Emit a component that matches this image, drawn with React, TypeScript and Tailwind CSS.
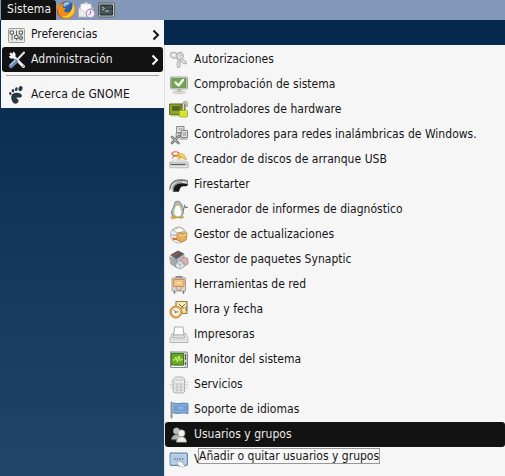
import React from "react";

type IconProps = { children: React.ReactNode; className?: string };

function Icon({ children, className = "" }: IconProps) {
  return (
    <svg viewBox="0 0 20 20" className={`h-5 w-5 shrink-0 ${className}`} fill="none" strokeLinecap="round" strokeLinejoin="round">
      {children}
    </svg>
  );
}

const FirefoxIcon = () => (
  <Icon>
    <circle cx="10.500" cy="10" r="9" fill="#d97a1e" />
    <circle cx="11" cy="8.500" r="7.200" fill="#2c5fa8" />
    <path d="M8 3c2-1.500 5-1 6 0l-2 2-2 .5L9 7 7 5z" fill="#8fc4e8" />
    <path d="M2 4c.5 1 1 1.500 2 1.500C5 4.500 6.500 4 8 4.500L6.500 7c1 1 2.500 1 3.500 1.500L8 10.500c1 2.500 5 2.500 7 0 2-2 2-5 1-7.500 3 3 4 7.500 2 11-2.500 4.500-9.500 6-13.500 3C.5 14 0 8 2 4z" fill="#ef8a1c" />
    <path d="M17 3.500c2.500 5 1.500 10-2 12.500-3 2-7 2-9.500 0 6 1.500 11-3.500 11.500-12.500z" fill="#f8d13a" />
    <path d="M1.500 8c0 5 2 8.500 6 10-4 0-8-5-6-10z" fill="#b9441a" />
  </Icon>
);

const MailIcon = () => (
  <Icon>
    <path d="M3 8l7-6.500L17 8v9H3z" fill="#dcdde0" stroke="#a5a7ac" strokeWidth=".8" />
    <path d="M5 4h10v7l-5 3-5-3z" fill="#fafafa" stroke="#c6c6c6" strokeWidth=".5" />
    <path d="M3 8l7 5 7-5v9H3z" fill="#ebebec" stroke="#b4b4b4" strokeWidth=".6" />
    <circle cx="14.500" cy="13.500" r="4.300" fill="#f1ebf4" stroke="#a893b8" strokeWidth="1.200" />
    <path d="M14.500 11V13.500l-1.500 1" stroke="#85738f" />
  </Icon>
);

const TerminalIcon = () => (
  <Icon>
    <rect x="2.500" y="3" width="16" height="14" rx="1" fill="#c6c8c2" stroke="#5e635f" />
    <rect x="4.500" y="5" width="12" height="10" fill="#37474a" stroke="#20292b" />
    <path d="M5 8c5 1 8-1 11-2M5 11h11M5 13h11" stroke="#5d6e70" strokeWidth=".7" />
    <path d="M6.500 7l2 1.500-2 1.500M9.500 11h3" stroke="#d9e2e0" strokeWidth=".9" />
  </Icon>
);

const PreferencesIcon = () => (
  <Icon>
    <rect x="1.500" y="3.500" width="16" height="14" rx="1" fill="#e9e9e7" stroke="#9b9d99" />
    <path d="M5 6v9M9.500 6v9M14 6v9" stroke="#666" />
    <path d="M3.500 6h3v3h-3zM8 10.500h3v3H8zM12.500 6h3v3h-3zM12.500 12h3v2h-3z" fill="#f9f9f9" stroke="#4d4d4d" strokeWidth=".9" />
  </Icon>
);

const ToolsIcon = () => (
  <Icon>
    <path d="M4 4l12.500 12.500" stroke="#eeeeec" strokeWidth="3" />
    <path d="M2 6c0 2 2 3 4 2.500L8.500 6C9 4 8 2 6 1.500v3L4.500 6z" fill="#f5f5f4" />
    <path d="M17 2.500L10 10" stroke="#e5e7e7" strokeWidth="2" />
    <path d="M8.500 11.500L4 16" stroke="#6788b5" strokeWidth="4.500" />
    <path d="M8 10.500l-4.500 4.500" stroke="#b6c9e0" strokeWidth="1.200" />
    <circle cx="16.300" cy="16.200" r=".8" fill="#777" />
  </Icon>
);

const GnomeIcon = () => (
  <Icon>
    <g fill="#263841">
      <ellipse cx="3.300" cy="8.500" rx="1.200" ry="1.500" transform="rotate(-25 3.300 8.500)" />
      <ellipse cx="6" cy="5.700" rx="1.300" ry="1.700" />
      <ellipse cx="9.300" cy="4.200" rx="1.300" ry="1.900" transform="rotate(12 9.300 4.200)" />
      <ellipse cx="13.500" cy="3.600" rx="2" ry="2.600" transform="rotate(25 13.500 3.600)" />
      <path d="M4.500 10.500c1-3 6.500-3.500 9.500-1.500 1.500 1 1 3-.5 3.500-2 .5-3-.5-4 .3-.7 1 2.500 1 2 3.200-.5 3-3.500 3.500-5.500 1.500-1.300-2-2.300-4.500-1.500-7z" />
    </g>
  </Icon>
);

const KeysIcon = () => (
  <Icon>
    <g fill="#dedede" stroke="#999" strokeWidth=".8">
      <path d="M2 3c3-2 6-.5 6 2l9.500 7-.5 2-2.500-.500L7 8C4.500 9 2 8 1.500 6z" />
      <path d="M9 3c3-2 6 .5 5.500 3.500-.3 1.500-2 3-3.500 2.500V16.500l-1.500 1.500L8 17l.8-1.500-1-1 1-2V8.500C7 7 7 4 9 3z" />
    </g>
    <circle cx="11.500" cy="5" r="1" fill="#fff" stroke="#999" strokeWidth=".5" />
    <circle cx="4.500" cy="5" r="1" fill="#fff" />
  </Icon>
);

const CheckIcon = () => (
  <Icon>
    <ellipse cx="10" cy="17.300" rx="6.500" ry="1.500" fill="#d8dad8" stroke="#b6b9b5" strokeWidth=".5" />
    <path d="M8 14h4v3H8z" fill="#bfc1bd" />
    <rect x="1.500" y="2" width="17" height="12" rx="1" fill="#dfe3dc" stroke="#a0a69c" />
    <rect x="3" y="3.500" width="14" height="9" fill="#74a650" stroke="#588745" strokeWidth=".7" />
    <path d="M6.500 7.500l3 3 4.500-5.500" stroke="white" strokeWidth="2.300" />
  </Icon>
);

const HardwareIcon = () => (
  <Icon>
    <rect x="1" y="4" width="15" height="10.500" fill="#91a62a" stroke="#556319" />
    <path d="M3 6h8v5H3z" fill="#5f722a" />
    <path d="M3 16v-2M5 16v-2M7 16v-2M9 16v-2" stroke="#8f9829" />
    <path d="M4 7h6M4 9h6M12 5v6" stroke="#40511c" strokeWidth=".8" />
    <path d="M14.500 10V5c0-4 3.500-4 3.500 0v1" stroke="#8c8e80" strokeWidth="2" />
    <path d="M14.500 10V5c0-4 3.500-4 3.500 0v1" stroke="#eeeedf" strokeWidth=".9" />
    <rect x="10.500" y="10.500" width="8" height="6.500" rx="1" fill="#dced36" stroke="#a3b32b" />
    <path d="M12 13h5M12 15h5" stroke="#bccb2d" strokeWidth=".7" />
  </Icon>
);

const WirelessIcon = () => (
  <Icon>
    <g fill="#e4e4e4" stroke="#858585">
      <rect x="8" y="1.500" width="7" height="6" />
      <rect x="12.500" y="5.500" width="6" height="7" />
      <rect x="7.500" y="8" width="4" height="4" />
    </g>
    <path d="M14 8h3M14 10h3M10 4h3M11 14h7" stroke="#888" />
    <path d="M3 12l6.500 6M10 11l-7 7" stroke="#777" strokeWidth="2.600" />
    <path d="M3 12l6.500 6M10 11l-7 7" stroke="#cacaca" strokeWidth=".9" />
  </Icon>
);

const DiskIcon = () => (
  <Icon>
    <path d="M2 12l2-2h12l2 2" fill="#efefed" stroke="#d6d6d4" />
    <rect x=".3" y="12" width="19.400" height="6" rx=".7" fill="#cbccca" stroke="#b4b4b4" strokeWidth=".5" />
    <path d="M2 14.500h14" stroke="#5a5e5c" />
    <path d="M1 16.500h17" stroke="#e5e5e5" />
    <ellipse cx="6.500" cy="3.800" rx="3.500" ry="2" stroke="#db5a32" strokeWidth="1.100" />
    <path d="M8 6c2-3 5-3 7-1s1 4 3 4c-2 1-4-1-5-2l-3 2z" fill="#f4d85f" stroke="#dca339" strokeWidth=".9" />
    <path d="M3 8l5-3 4 2" stroke="#dc7436" />
  </Icon>
);

const FirestarterIcon = () => (
  <Icon>
    <path d="M.8 15C.5 7 6 2.500 18.500 5.500v5c-6-2-8 0-9 6H4c0-6 3-9 8-9" fill="#dedede" stroke="#777" strokeWidth=".8" />
    <path d="M4.500 16.500c0-7 4-9.500 14.500-7.500l-2 2.500c-4-1-6 0-7 5z" fill="#181818" />
    <path d="M1 13C2 7 8 4 18 6" stroke="#666" />
    <path d="M3 14C4 9 8 7 13 7" stroke="#999" />
  </Icon>
);

const PenguinIcon = () => (
  <Icon>
    <path d="M6.500 2c3-2 5 0 5.500 2 3 3 3.500 9 .5 12-3 2-7 2-9 0C1 12 4 9 5 6c.3-2 .3-3 1.500-4z" fill="#b1beae" stroke="#6f877f" />
    <path d="M8 5c3-1 6 9 3 11-7 2-7-6-3-11z" fill="#fff" stroke="#e2e5dc" strokeWidth=".6" />
    <path d="M13.500 10l4-4M15.500 5v2.500h3" stroke="#7c827d" />
    <path d="M7 4l3 .8-2.500 1.200z" fill="#dfa33c" />
    <path d="M2 17l4.500-1 1 2-4.500.800zM10 17l3.500-1 1.500 1.500-4 1z" fill="#edb93f" stroke="#b98837" strokeWidth=".6" />
  </Icon>
);

const UpdateIcon = () => (
  <Icon>
    <circle cx="9.500" cy="10" r="8" fill="#efefed" stroke="#a9a9a7" strokeWidth=".8" />
    <path d="M4 5l7-3 5 4-7 2z" fill="#fcfcfc" stroke="#999" strokeWidth=".7" />
    <path d="M2 9.500c3 2 5 0 7 0" stroke="#bcbcbc" strokeWidth="1.500" />
    <path d="M9 8h9l-1 7-4 2-5-2z" fill="#eaae56" stroke="#b67e36" strokeWidth=".9" />
    <path d="M9 9l4 2 5-2" stroke="#f7d999" />
    <path d="M3 13.500l2-1.500v1h3v2H5v1z" fill="#c9763a" />
  </Icon>
);

const PackagesIcon = () => (
  <Icon>
    <path d="M2 5l7-4 6 3-7 5z" fill="#625852" stroke="#534c47" strokeWidth=".8" />
    <path d="M1 7l7 3v8l-6-4z" fill="#a6adb1" stroke="#7c8286" strokeWidth=".6" />
    <path d="M8 9l7-5v7l-7 5z" fill="#bcc3c8" stroke="#888" strokeWidth=".6" />
    <path d="M12 9l4-2 3 2v5l-4 2-3-2z" fill="#d8afaf" stroke="#b47878" strokeWidth=".7" />
    <path d="M7 13l4-2 4 2v4l-4 2-4-2z" fill="#e2e7ea" stroke="#8f9aa4" strokeWidth=".7" />
    <path d="M7 13l4 1.500 4-1.500M11 14.500v4" stroke="#8f9aa4" strokeWidth=".6" />
    <path d="M4 6l5-3" stroke="#b76460" />
  </Icon>
);

const NetworkIcon = () => (
  <Icon>
    <path d="M7 2h6M5.500 18v-1.500m9 1.500v-1.500" stroke="#59677f" strokeWidth="1.500" />
    <path d="M3.500 3h13v13h-13z" fill="#ddd8d0" stroke="#af9e89" />
    <rect x="5" y="4.500" width="10" height="7" fill="#f2c68c" stroke="#cf8d4a" />
    <rect x="7.500" y="6.500" width="5" height="2.500" fill="#ffe9c4" stroke="#e1a563" strokeWidth=".5" />
    <path d="M7 13h1m4 0h1M8 15h4" stroke="#9a8c7b" />
  </Icon>
);

const ClockIcon = () => (
  <Icon>
    <rect x="7" y="1.500" width="11" height="12" fill="#f8edaf" stroke="#8d7e59" strokeWidth="1.200" />
    <path d="M10 4l3 3 3-3M12 8h3M17 7v4" stroke="#716957" />
    <path d="M15.500 13l3-3v3z" fill="#d2b84e" />
    <circle cx="7" cy="12" r="6" fill="#f7f3ea" stroke="#a87131" />
    <circle cx="7" cy="12" r="5" stroke="#eba33a" strokeWidth="1.700" />
    <path d="M5 10l2 2h2M7 12l-1 1" stroke="#77634b" strokeWidth=".9" />
  </Icon>
);

const PrinterIcon = () => (
  <Icon>
    <path d="M3 9L1 14v3.500h18V14l-2-5z" fill="#ececec" stroke="#b4b4b4" />
    <path d="M6 2h8l1 8H5z" fill="#fff" stroke="#aaa" />
    <path d="M5 10h10l1 3H4z" fill="#e2e2e2" stroke="#b1b1b1" />
    <path d="M3 15h14" stroke="#d1d1d1" />
  </Icon>
);

const MonitorIcon = () => (
  <Icon>
    <rect x="1.500" y="2" width="17" height="15.500" rx=".5" fill="#d0d3cd" stroke="#858b85" />
    <rect x="3" y="3.500" width="11.500" height="11.500" fill="#69ab20" stroke="#3c7524" />
    <path d="M4 10h1.500L7 7l1.500 5L10 6l1.500 5 1-2h1" stroke="#dcf78a" />
    <path d="M16.500 5v1m0 2v1m0 4v1" stroke="#353b35" strokeWidth="1.300" />
    <path d="M3 16.500h12" stroke="#fff" />
  </Icon>
);

const ServicesIcon = () => (
  <Icon>
    <path d="M1 10h18M2 7h16M2 13h16" stroke="#bcbcbc" strokeWidth=".8" />
    <path d="M4.500 4l2-2h7l2 2v13l-2 1h-7l-2-1z" fill="#e9e9e9" stroke="#aaa" strokeWidth=".9" />
    <path d="M6 5h8M6 9h8M6 12h8M6 15h8M8 9v8m4-8v8" stroke="#b6b6b6" strokeWidth=".8" />
  </Icon>
);

const FlagIcon = () => (
  <Icon>
    <path d="M2.500 2.500v15" stroke="#88939e" strokeWidth="2" />
    <path d="M4.500 3c5 2 8-1 14.500.500v10c-6-1.500-9 1-14.500-.500z" fill="#6f9fd2" stroke="#507caf" strokeWidth=".8" />
    <path d="M5.500 5c5 1 8-1 12.500 0M5.500 11.500c5 1 8-1 12.500 0" stroke="#9abde1" strokeWidth=".8" />
    <path d="M8 7l3-1 3 1 2-1-1 3-3 1-3-1z" fill="#8eb5df" stroke="#6290c3" strokeWidth=".5" />
  </Icon>
);

const UsersIcon = () => (
  <Icon>
    <circle cx="7.500" cy="6" r="3.300" fill="#c1c1bf" stroke="#777" strokeWidth=".6" />
    <path d="M2.500 14.500c0-6 10-7 10 0z" fill="#b5b5b3" stroke="#777" strokeWidth=".6" />
    <circle cx="12.500" cy="8.300" r="3.500" fill="#f2f2f0" stroke="#999" strokeWidth=".6" />
    <path d="M7.500 17c0-7 10-7 10 0z" fill="#e9e9e6" stroke="#999" strokeWidth=".6" />
    <path d="M11 13l1.500 2 2-2" stroke="#fff" />
  </Icon>
);

const LoginIcon = () => (
  <Icon>
    <rect x="1" y="3" width="17.500" height="12.500" rx="1" fill="#8aabd2" stroke="#6888ae" />
    <rect x="2.500" y="4.500" width="14.500" height="9.500" fill="#b2cae4" stroke="#d8e5f2" strokeWidth=".7" />
    <path d="M6 9h.1M8.500 9h.1M11 9h.1M13.500 9h.1" stroke="#4d6680" strokeWidth="1.300" />
    <path d="M8 11l7 2-1 1 2 2-2 1.500-2-2-1.500 1.500z" fill="#fff" stroke="#9aa7b5" strokeWidth=".7" />
  </Icon>
);

const adminItems = [
  { label: "Autorizaciones", Glyph: KeysIcon },
  { label: "Comprobación de sistema", Glyph: CheckIcon },
  { label: "Controladores de hardware", Glyph: HardwareIcon },
  { label: "Controladores para redes inalámbricas de Windows.", Glyph: WirelessIcon },
  { label: "Creador de discos de arranque USB", Glyph: DiskIcon },
  { label: "Firestarter", Glyph: FirestarterIcon },
  { label: "Generador de informes de diagnóstico", Glyph: PenguinIcon },
  { label: "Gestor de actualizaciones", Glyph: UpdateIcon },
  { label: "Gestor de paquetes Synaptic", Glyph: PackagesIcon },
  { label: "Herramientas de red", Glyph: NetworkIcon },
  { label: "Hora y fecha", Glyph: ClockIcon },
  { label: "Impresoras", Glyph: PrinterIcon },
  { label: "Monitor del sistema", Glyph: MonitorIcon },
  { label: "Servicios", Glyph: ServicesIcon },
  { label: "Soporte de idiomas", Glyph: FlagIcon },
  { label: "Usuarios y grupos", Glyph: UsersIcon, selected: true },
  { label: "V", Glyph: LoginIcon },
];

function Arrow({ light = false }: { light?: boolean }) {
  return (
    <svg viewBox="0 0 8 12" className="mr-[4px] ml-auto h-3 w-2" fill="none" stroke={light ? "#fff" : "#161616"} strokeWidth="2">
      <path d="M1.500 1.500L6 6l-4.500 4.500" />
    </svg>
  );
}

export default function App() {
  return (
    <main className="h-[476px] w-[505px] overflow-hidden bg-linear-to-b from-[#04264b] to-[#214569] font-['DejaVu_Sans_Condensed','DejaVu_Sans',sans-serif] text-[12px] leading-[25px] font-stretch-condensed text-[#151515]">
      <header className="flex h-5 bg-[#8398b8] pl-px">
        <div className="h-5 w-[55px] rounded-tr-[3px] bg-[#121212] pl-[6px] leading-[19px] tracking-[0.1px] text-[#eee]">Sistema</div>
        <div className="flex">
          <FirefoxIcon />
          <MailIcon />
          <TerminalIcon />
        </div>
      </header>
      <div className="flex">
        <nav className="ml-px h-[88px] w-[163px] shrink-0 bg-[#f6f6f6] pt-[2px]">
          <div className="flex h-[25px] items-center gap-[4px] pl-[6px]">
            <PreferencesIcon /><span>Preferencias</span><Arrow />
          </div>
          <div className="mx-px flex h-[25px] items-center gap-[4px] rounded-[3px] bg-[#121212] pl-[5px] tracking-[0.08px] text-[#e9e9e9]">
            <ToolsIcon /><span>Administración</span><Arrow light />
          </div>
          <div className="mx-[5px] mt-[3px] h-px bg-[#a2a2a2]" />
          <div className="mt-[6px] flex h-[25px] items-center gap-[4px] pl-[6px] tracking-[0.06px]">
            <GnomeIcon /><span>Acerca de GNOME</span>
          </div>
        </nav>
        <section className="mt-[25px] h-[431px] w-[341px] border-l border-[#dcdfe4] bg-[#f6f6f6] pt-[2px]">
          {adminItems.map(({ label, Glyph, selected }) => (
            <div key={label} className={`relative flex h-[25px] items-center gap-[5px] pl-[4px] tracking-[0.03px] ${selected ? "rounded-[3px] bg-[#121212] text-[#eaeaea]" : ""}`}>
              <Glyph /><span>{label}</span>
              {selected && (
                <div className="absolute top-[26px] left-[33px] z-10 h-4 w-[182px] border border-[#969696] bg-[#f7f7f7] leading-[14px] tracking-normal whitespace-nowrap text-[#151515]">
                  Añadir o quitar usuarios y grupos
                </div>
              )}
            </div>
          ))}
        </section>
      </div>
    </main>
  );
}
